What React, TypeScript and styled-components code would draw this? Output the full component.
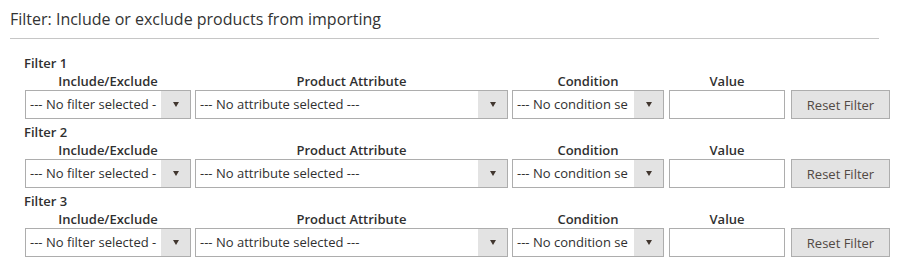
import styled, {createGlobalStyle} from "styled-components";

const GlobalStyle = createGlobalStyle`
  body {
    margin: 0;
    background: #ffffff;
    font-family: "Open Sans", "Liberation Sans", sans-serif;
    color: #303030;
  }
`

const Section = styled.div`
  padding: 9px 0 0 10px;
`

const Title = styled.div`
  width: 869px;
  font-size: 16px;
  line-height: 20px;
  color: #333333;
  padding-bottom: 9px;
  border-bottom: 1px solid #c6c6c6;
  margin-bottom: 15px;
`

const FilterList = styled.div`
  display: flex;
  flex-direction: column;
  gap: 4px;
  padding-left: 15px;
`

const FilterBlock = styled.div`
  display: flex;
  flex-direction: column;
`

const FilterName = styled.div`
  font-size: 13px;
  font-weight: 600;
  line-height: 18px;
  margin-left: -1px;
`

const Columns = styled.div`
  display: flex;
  align-items: flex-end;
`

const Column = styled.div<{ $width: number; $gap: number }>`
  width: ${p => p.$width}px;
  margin-right: ${p => p.$gap}px;
  display: flex;
  flex-direction: column;
  flex-shrink: 0;
`

const Heading = styled.div`
  height: 18px;
  line-height: 18px;
  font-size: 13px;
  font-weight: 600;
  text-align: center;
  white-space: nowrap;
`

const SelectBox = styled.div`
  box-sizing: border-box;
  height: 29px;
  display: flex;
  border: 1px solid #adadad;
  background: #ffffff;
`

const SelectText = styled.div`
  flex: 1;
  overflow: hidden;
  white-space: nowrap;
  padding-left: 4px;
  font-size: 13px;
  line-height: 27px;
  color: #303030;
`

const Arrow = styled.div`
  width: 29px;
  flex-shrink: 0;
  background: #e3e3e3;
  display: flex;
  align-items: center;
  justify-content: center;

  &::after {
    content: "";
    border-left: 3.5px solid transparent;
    border-right: 3.5px solid transparent;
    border-top: 5px solid #41362f;
  }
`

const TextInput = styled.input`
  box-sizing: border-box;
  height: 29px;
  width: 100%;
  margin: 0;
  border: 1px solid #adadad;
  background: #ffffff;
  padding: 0 6px;
  font-family: inherit;
  font-size: 13px;
  outline: none;
`

const ResetButton = styled.button`
  box-sizing: border-box;
  height: 29px;
  width: 100%;
  margin: 0;
  border: 1px solid #adadad;
  background: #e3e3e3;
  color: #514943;
  font-family: inherit;
  font-size: 13px;
  padding: 0;
  cursor: pointer;
`

const Select = ({text}: { text: string }) => (
    <SelectBox>
        <SelectText>{text}</SelectText>
        <Arrow/>
    </SelectBox>
)

const filters = [1, 2, 3]

const App = () => {
    return (
        <>
            <GlobalStyle/>
            <Section>
                <Title>Filter: Include or exclude products from importing</Title>
                <FilterList>
                    {filters.map(n => (
                        <FilterBlock key={n}>
                            <FilterName>Filter {n}</FilterName>
                            <Columns>
                                <Column $width={166} $gap={4}>
                                    <Heading>Include/Exclude</Heading>
                                    <Select text="--- No filter selected -"/>
                                </Column>
                                <Column $width={313} $gap={4}>
                                    <Heading>Product Attribute</Heading>
                                    <Select text="--- No attribute selected ---"/>
                                </Column>
                                <Column $width={152} $gap={5}>
                                    <Heading>Condition</Heading>
                                    <Select text="--- No condition se"/>
                                </Column>
                                <Column $width={116} $gap={6}>
                                    <Heading>Value</Heading>
                                    <TextInput type="text"/>
                                </Column>
                                <Column $width={99} $gap={0}>
                                    <Heading/>
                                    <ResetButton>Reset Filter</ResetButton>
                                </Column>
                            </Columns>
                        </FilterBlock>
                    ))}
                </FilterList>
            </Section>
        </>
    )
}

export default App
